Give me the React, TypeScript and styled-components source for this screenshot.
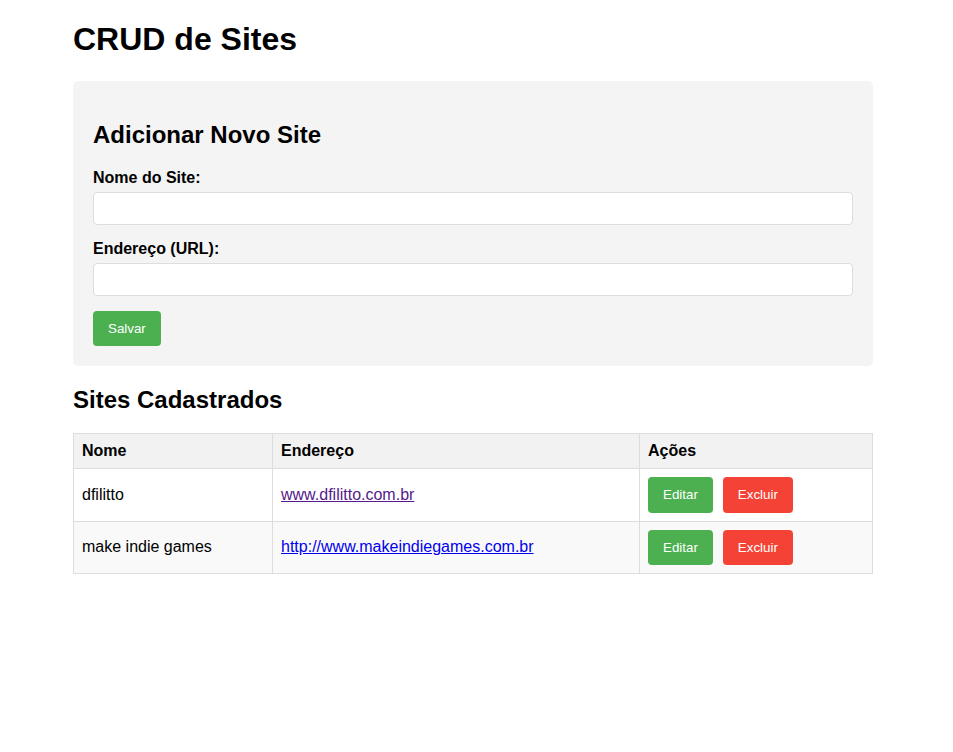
import React from 'react';
import styled, { createGlobalStyle } from 'styled-components';

const GlobalStyle = createGlobalStyle`
  body {
    margin: 0;
    background: #ffffff;
    font-family: "Liberation Sans", Arial, sans-serif;
    color: #000000;
  }
`;

const Container = styled.div`
  width: 800px;
  margin-left: 73px;
`;

const Title = styled.h1`
  font-size: 32px;
  font-weight: bold;
  margin: 21.44px 0 22.5px;
`;

const FormBox = styled.div`
  background-color: #f4f4f4;
  padding: 20px;
  border-radius: 5px;
`;

const SectionTitle = styled.h2<{ $flush?: boolean }>`
  font-size: 24px;
  font-weight: bold;
  margin: 19.92px 0 ${(p) => (p.$flush ? '0' : '19.92px')};
`;

const Label = styled.label`
  display: block;
  font-weight: bold;
  font-size: 16px;
  margin-bottom: 5px;
`;

const Input = styled.input`
  display: block;
  box-sizing: border-box;
  width: 100%;
  height: 33px;
  padding: 8px;
  margin-bottom: 15px;
  border: 1px solid #dddddd;
  border-radius: 4px;
  background: #ffffff;
  font-family: inherit;
`;

const Button = styled.button<{ $danger?: boolean }>`
  background-color: ${(p) => (p.$danger ? '#f44336' : '#4caf50')};
  color: #ffffff;
  border: none;
  border-radius: 4px;
  padding: 10px 15px;
  font-family: "Liberation Sans", Arial, sans-serif;
  font-size: 13.333px;
  line-height: 15.3px;
  cursor: pointer;
`;

const Table = styled.table`
  width: 100%;
  border-collapse: collapse;
  margin-top: 19.5px;
  font-size: 16px;

  th,
  td {
    border: 1px solid #dddddd;
    padding: 8px;
    text-align: left;
  }

  th {
    background-color: #f2f2f2;
    font-weight: bold;
  }

  tbody tr:nth-child(even) {
    background-color: #f9f9f9;
  }
`;

const NameHead = styled.th`
  width: 182px;
`;

const UrlHead = styled.th`
  width: 350px;
`;

const Actions = styled.div`
  display: flex;
  gap: 10px;
`;

const SiteLink = styled.a<{ $visited?: boolean }>`
  color: ${(p) => (p.$visited ? '#551a8b' : '#0000ee')};
  text-decoration: underline;
`;

const sites = [
  { nome: 'dfilitto', url: 'www.dfilitto.com.br', visited: true },
  { nome: 'make indie games', url: 'http://www.makeindiegames.com.br', visited: false },
];

const App: React.FC = () => {
  return (
    <>
      <GlobalStyle />
      <Container>
        <Title>CRUD de Sites</Title>
        <FormBox>
          <SectionTitle>Adicionar Novo Site</SectionTitle>
          <Label htmlFor="nome">Nome do Site:</Label>
          <Input id="nome" type="text" />
          <Label htmlFor="url">Endereço (URL):</Label>
          <Input id="url" type="text" />
          <Button>Salvar</Button>
        </FormBox>

        <SectionTitle $flush>Sites Cadastrados</SectionTitle>
        <Table>
          <thead>
            <tr>
              <NameHead>Nome</NameHead>
              <UrlHead>Endereço</UrlHead>
              <th>Ações</th>
            </tr>
          </thead>
          <tbody>
            {sites.map((s) => (
              <tr key={s.nome}>
                <td>{s.nome}</td>
                <td>
                  <SiteLink href="#" $visited={s.visited}>
                    {s.url}
                  </SiteLink>
                </td>
                <td>
                  <Actions>
                    <Button>Editar</Button>
                    <Button $danger>Excluir</Button>
                  </Actions>
                </td>
              </tr>
            ))}
          </tbody>
        </Table>
      </Container>
    </>
  );
};

export default App;
